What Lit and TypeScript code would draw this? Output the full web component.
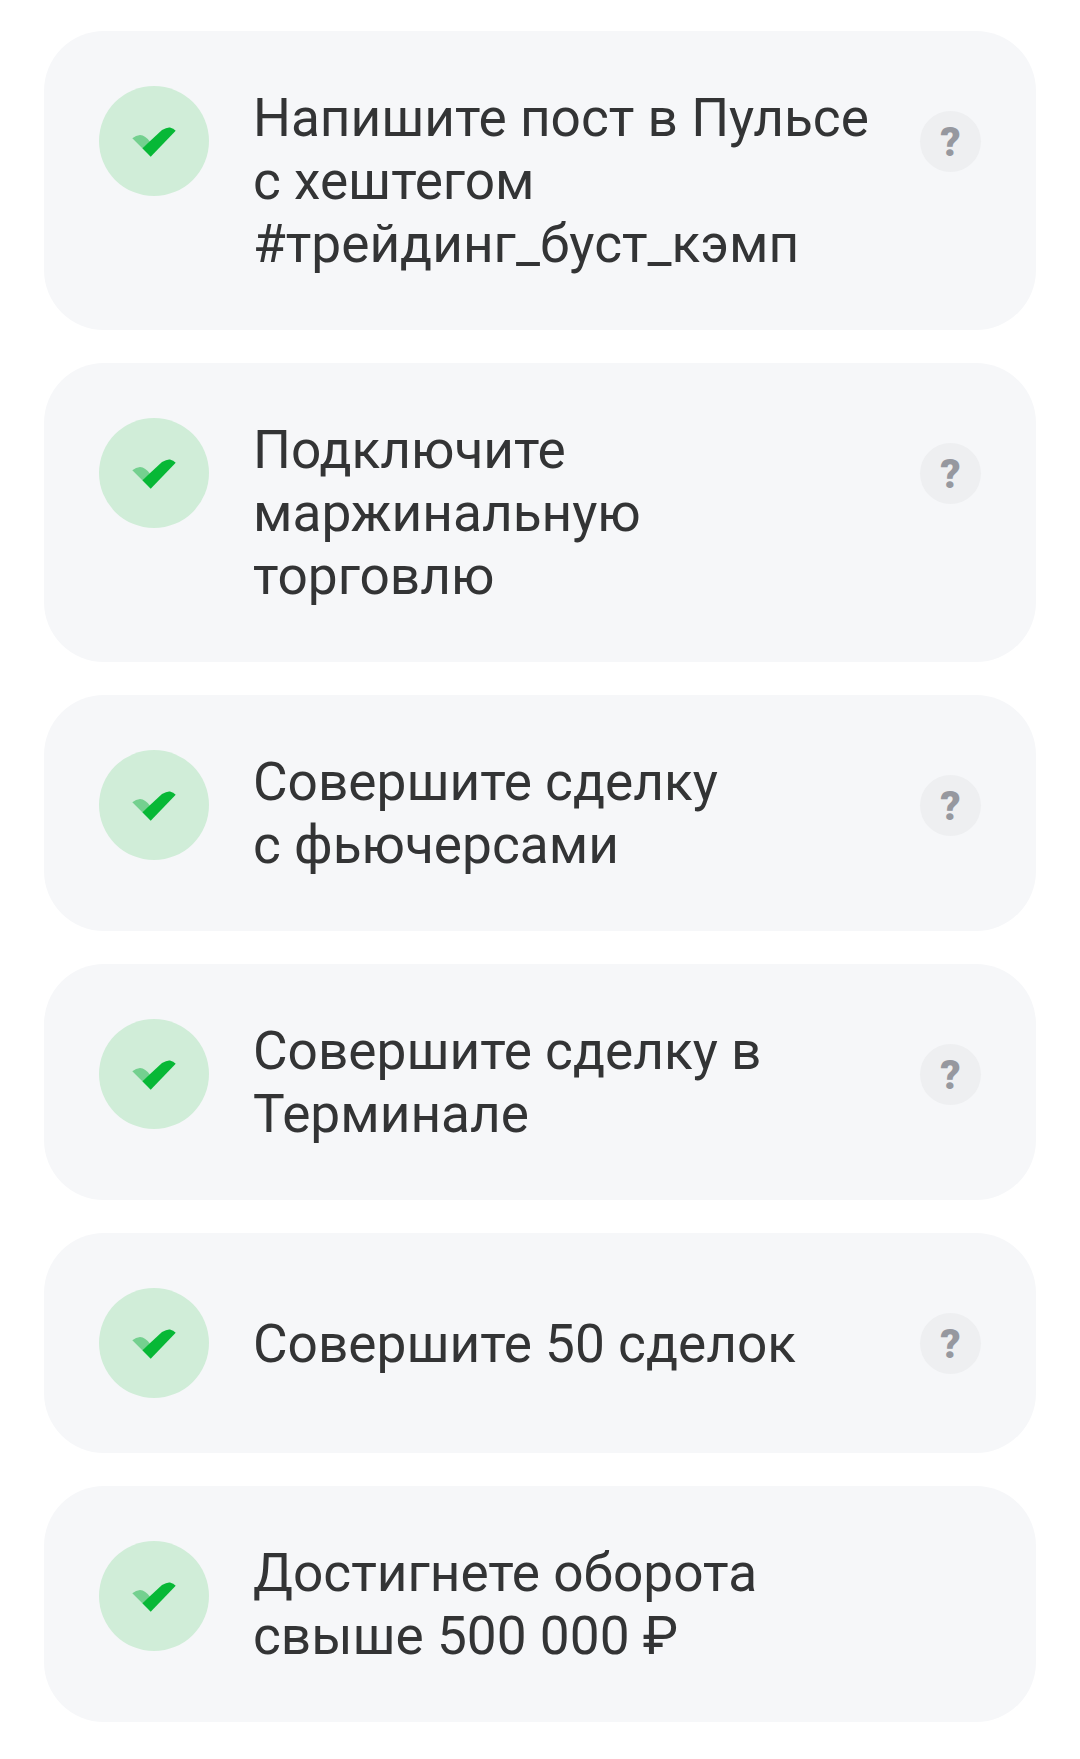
import { LitElement, html, css } from "lit";
import { customElement } from "lit/decorators.js";

const NB = "\u00a0";
const ROWS: { lines: string; help: boolean }[] = [
  { lines: `Напишите пост в Пульсе с${NB}хештегом #трейдинг_буст_кэмп`, help: true },
  { lines: "Подключите маржинальную торговлю", help: true },
  { lines: `Совершите сделку с${NB}фьючерсами`, help: true },
  { lines: "Совершите сделку в Терминале", help: true },
  { lines: "Совершите 50 сделок", help: true },
  { lines: `Достигнете оборота свыше${NB}500${NB}000${NB}₽`, help: false },
];

@customElement("app-root")
export class AppRoot extends LitElement {
  static styles = css`
    :host {
      display: block;
      background: #fff;
      font-family: Roboto, "Liberation Sans", sans-serif;
    }
    .list {
      display: flex;
      flex-direction: column;
      gap: 33px;
      padding: 31px 44px 37px;
    }
    .card {
      display: flex;
      align-items: flex-start;
      padding: 55px;
      background: #f6f7f9;
      border-radius: 60px;
    }
    .status {
      flex: none;
      width: 110px;
      height: 110px;
      display: block;
    }
    .text {
      flex: 1;
      min-height: 110px;
      margin: 0 39px 0 44px;
      display: flex;
      align-items: center;
      font-size: 53.2px;
      line-height: 63px;
      color: #333435;
    }
    .text span {
      margin: 1px 0 -1px;
    }
    .help {
      flex: none;
      width: 61px;
      height: 61px;
      margin-top: 25px;
      padding-top: 2px;
      box-sizing: border-box;
      border-radius: 50%;
      background: #eeeff1;
      color: #96989f;
      display: flex;
      align-items: center;
      justify-content: center;
      font-size: 40px;
      font-weight: 900;
      line-height: 1;
    }
  `;

  render() {
    return html`<div class="list">
      ${ROWS.map(
        (r) => html`<div class="card">
          <svg class="status" viewBox="0 0 110 110">
            <circle cx="55" cy="55" r="55" fill="#d0edd8" />
            <path d="M33.3 52.3 Q37 49.5 41 49 Q46.5 49.5 51 55.7 L43.3 62.3 Z" fill="#74d08f" />
            <path d="M43.3 62.3 L63 44 Q68 41 71 41.5 Q74.5 42.5 76.7 44.7 L51.7 70.7 Z" fill="#07b836" />
          </svg>
          <div class="text"><span>${r.lines}</span></div>
          ${r.help ? html`<div class="help">?</div>` : ""}
        </div>`
      )}
    </div>`;
  }
}
